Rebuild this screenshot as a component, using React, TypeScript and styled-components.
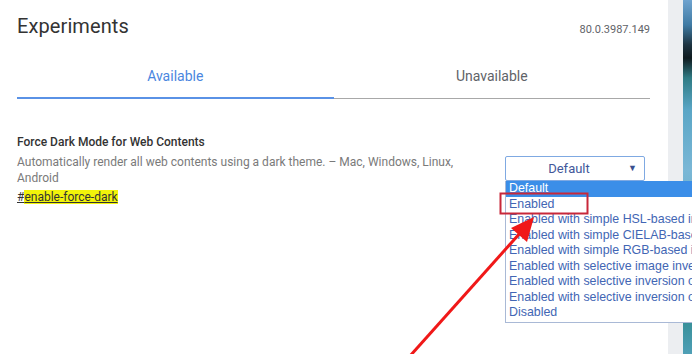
import styled, { createGlobalStyle } from "styled-components";

const GlobalStyle = createGlobalStyle`
  html, body {
    margin: 0;
    padding: 0;
    overflow: hidden;
    background: #ffffff;
  }
  body {
    font-family: Roboto, "Liberation Sans", Arial, sans-serif;
  }
`;

const Page = styled.div`
  position: relative;
  display: flex;
  width: 692px;
  height: 354px;
  overflow: hidden;
`;

const Main = styled.main`
  width: 668px;
  padding: 0 18px 0 17px;
  box-sizing: border-box;
  background: #ffffff;
`;

const SideGutter = styled.div`
  width: 15px;
  background: #eceef1;
`;

const SideImage = styled.div`
  flex: 1;
  background: linear-gradient(
    180deg,
    #6fa3cf 0px,
    #3f7aa3 25px,
    #1d3340 45px,
    #0f1a1f 58px,
    #2f7b84 78px,
    #5aa6c6 110px,
    #7ab7d6 170px,
    #5da7b8 260px,
    #2f8a8e 310px,
    #4f9fb6 354px
  );
`;

const Header = styled.header`
  display: flex;
  justify-content: space-between;
  align-items: baseline;
  padding-top: 14px;
  height: 40px;
  box-sizing: border-box;
`;

const Title = styled.h1`
  margin: 0;
  font-size: 20px;
  font-weight: 400;
  color: #333333;
  letter-spacing: 0.1px;
`;

const Version = styled.span`
  font-size: 11px;
  color: #5f6368;
`;

const Tabs = styled.nav`
  display: flex;
  margin-top: 19px;
`;

const Tab = styled.div<{ $active?: boolean }>`
  flex: 1;
  display: flex;
  align-items: center;
  justify-content: center;
  height: 40px;
  padding-bottom: ${(p) => (p.$active ? "4px" : "5px")};
  box-sizing: border-box;
  font-size: 14px;
  color: ${(p) => (p.$active ? "#4a86e0" : "#5f6368")};
  border-bottom: ${(p) => (p.$active ? "2px solid #5a92e6" : "1px solid #a8a8a8")};
`;

const FeatureRow = styled.section`
  display: flex;
  justify-content: space-between;
  margin-top: 35px;
`;

const FeatureText = styled.div`
  width: 460px;
  font-size: 12px;
  line-height: 16px;
`;

const FeatureName = styled.div`
  font-weight: 500;
  color: #333333;
  margin-bottom: 4px;
`;

const FeatureDesc = styled.div`
  color: #7a7a7a;
`;

const FeatureLink = styled.div`
  margin-top: 3px;
  color: #333333;
  text-decoration: underline;
`;

const Mark = styled.span`
  background: #f2f40a;
`;

const SelectWrap = styled.div`
  position: relative;
  width: 140px;
  margin-top: 22px;
  margin-right: 5px;
`;

const SelectBox = styled.div`
  display: flex;
  align-items: center;
  justify-content: center;
  position: relative;
  height: 25px;
  padding-right: 12px;
  box-sizing: border-box;
  border: 1px solid #7fa9e2;
  border-radius: 2px;
  font-size: 13px;
  color: #42579a;
`;

const Caret = styled.span`
  position: absolute;
  right: 7px;
  top: 6px;
  font-size: 9px;
  color: #3a4f8f;
`;

const OptionList = styled.ul`
  position: absolute;
  top: 25px;
  left: 0;
  width: 200px;
  margin: 0;
  padding: 0 0 1px;
  list-style: none;
  background: #ffffff;
  border: 1px solid #a9b9d6;
  border-top: none;
  font-family: "Liberation Sans", Arial, sans-serif;
  font-size: 12.4px;
`;

const Option = styled.li<{ $selected?: boolean }>`
  height: 15.5px;
  line-height: 15.5px;
  padding-left: 3px;
  white-space: nowrap;
  overflow: hidden;
  color: ${(p) => (p.$selected ? "#ffffff" : "#4266b4")};
  background: ${(p) => (p.$selected ? "#3b8ee8" : "transparent")};
`;

const Annotation = styled.svg`
  position: absolute;
  left: 0;
  top: 0;
  pointer-events: none;
`;

const options = [
  "Default",
  "Enabled",
  "Enabled with simple HSL-based inversion",
  "Enabled with simple CIELAB-based inversion",
  "Enabled with simple RGB-based inversion",
  "Enabled with selective image inversion",
  "Enabled with selective inversion of non-image elements",
  "Enabled with selective inversion of everything",
  "Disabled",
];

export default function App() {
  return (
    <>
      <GlobalStyle />
      <Page>
        <Main>
          <Header>
            <Title>Experiments</Title>
            <Version>80.0.3987.149</Version>
          </Header>
          <Tabs>
            <Tab $active>Available</Tab>
            <Tab>Unavailable</Tab>
          </Tabs>
          <FeatureRow>
            <FeatureText>
              <FeatureName>Force Dark Mode for Web Contents</FeatureName>
              <FeatureDesc>
                Automatically render all web contents using a dark theme. – Mac, Windows, Linux,
                Android
              </FeatureDesc>
              <FeatureLink>
                #<Mark>enable-force-dark</Mark>
              </FeatureLink>
            </FeatureText>
            <SelectWrap>
              <SelectBox>
                Default
                <Caret>▼</Caret>
              </SelectBox>
              <OptionList>
                {options.map((o, i) => (
                  <Option key={o} $selected={i === 0}>
                    {o}
                  </Option>
                ))}
              </OptionList>
            </SelectWrap>
          </FeatureRow>
        </Main>
        <SideGutter />
        <SideImage />
        <Annotation width="692" height="354" viewBox="0 0 692 354">
          <rect x="500.5" y="193.5" width="87" height="20" fill="none" stroke="#c8283a" strokeWidth="2" />
          <line x1="410" y1="356" x2="521" y2="232" stroke="#f01818" strokeWidth="3" />
          <polygon points="534,217 527,242 511,228" fill="#f01818" />
        </Annotation>
      </Page>
    </>
  );
}
